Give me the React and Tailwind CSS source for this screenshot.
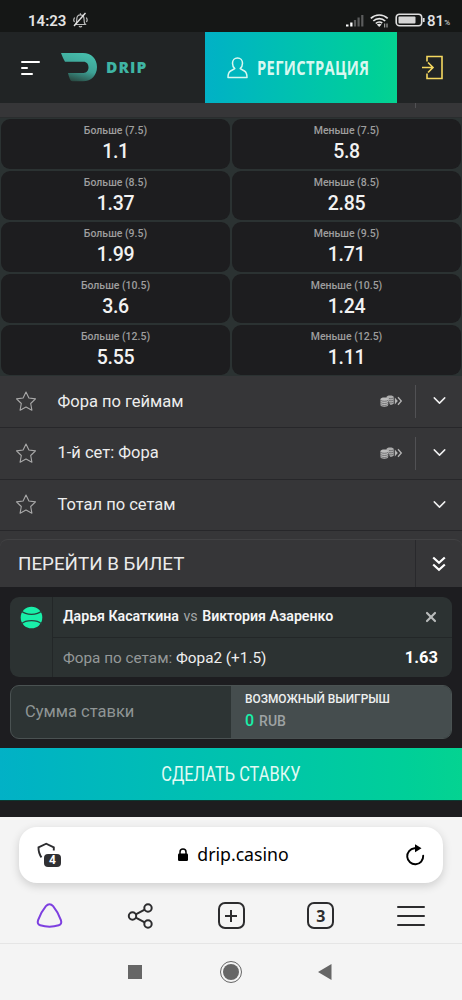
import { ChevronDown, X } from 'lucide-react'
import clsx from 'clsx'

const odds = [
  { line: '7.5', over: '1.1', under: '5.8' },
  { line: '8.5', over: '1.37', under: '2.85' },
  { line: '9.5', over: '1.99', under: '1.71' },
  { line: '10.5', over: '3.6', under: '1.24' },
  { line: '12.5', over: '5.55', under: '1.11' },
]

const markets = [
  { name: 'Фора по геймам', cashout: true },
  { name: '1-й сет: Фора', cashout: true },
  { name: 'Тотал по сетам', cashout: false },
]

function StatusBar() {
  return (
    <div className="flex h-8 items-center bg-[#151716] pt-2 pr-[12px] pl-7 text-[#e4e4e4]">
      <span className="mt-px w-[39px] text-[15px] leading-4 font-semibold whitespace-nowrap">14:23</span>
      <svg className="ml-[5px]" width="17" height="16" viewBox="0 0 17 16" fill="none" stroke="#bdbdbd" strokeWidth="1.2">
        <path d="M3.5 12.5h9.8c-1.2-1.2-1.3-2.5-1.3-5.5 0-2.6-1.5-4.2-3.6-4.2S4.8 4.4 4.8 7c0 3-.1 4.3-1.3 5.5zM7 14.2c.7.9 2.2.9 2.9 0M8.4 2.8V1.3M2.6 5.5C1.6 7 1.7 9 2.5 10M14.3 5.5c1 1.5.9 3.5.1 4.5" />
        <path d="M13.5 1 2 14" stroke="#e4e4e4" strokeWidth="1.4" />
      </svg>
      <svg className="ml-auto" width="18" height="13" viewBox="0 0 18 13">
        <path d="M0 12.5v-2h2.5v2zM4.2 12.5v-4h2.3v4z" fill="#fff" />
        <path d="M7.9 12.5V6h2.2v6.5zM11.500 12.5v-9h2.2v9zM15.2 12.5V1h2.2v11.5z" fill="#5b5c5c" />
      </svg>
      <svg className="ml-[6px]" width="19" height="15" viewBox="0 0 19 15" fill="none" stroke="#e4e4e4" strokeWidth="1.7">
        <path d="M.8 5.3c4.7-4.4 12.2-4.4 16.9 0M3.300 8c3.3-3.2 8.6-3.2 11.9 0M5.8 10.5c2-1.9 4.800-1.900 6.400-.3" />
        <path d="m6.8 11.500 2.400 2.600 2.400-2.600c-1.300-1.100-3.400-1.100-4.800 0z" fill="#e4e4e4" stroke="none" />
        <path d="M14.7 10.500v4M17 10.500v4" strokeWidth=".8" />
      </svg>
      <svg className="ml-[6px]" width="30" height="14" viewBox="0 0 30 14" fill="none">
        <rect x="1.2" y="1.2" width="25.5" height="11.5" rx="3.3" stroke="#dedede" strokeWidth="1.6" />
        <rect x="3.5" y="3.5" width="17" height="7" rx="1" fill="#d5d5d5" />
        <path d="M28.7 5v4" stroke="#dedede" strokeWidth="1.8" />
      </svg>
      <span className="mt-[2px] ml-[2px] text-[15px] leading-4 font-medium">81</span>
      <span className="mt-[5px] text-[8px] leading-3">%</span>
    </div>
  )
}

function Header() {
  return (
    <header className="flex h-[71px] bg-[#212425]">
      <div className="flex w-[205px] shrink-0 items-center pl-[21px]">
        <div className="flex w-5 flex-col gap-[4px]">
          <span className="h-[2px] w-[19px] rounded-full bg-white" />
          <span className="h-[2px] w-[7px] rounded-full bg-white" />
          <span className="h-[2px] w-[12px] rounded-full bg-white" />
        </div>
        <svg className="ml-5" width="37" height="29" viewBox="0 0 37 29">
          <defs>
            <linearGradient id="drip" x1=".65" y1="0" x2=".3" y2="1">
              <stop offset="0" stopColor="#46beac" />
              <stop offset=".55" stopColor="#3da195" />
              <stop offset="1" stopColor="#29463f" />
            </linearGradient>
          </defs>
          <path d="M0 0h22c8.5 0 14 6 14 14s-5.500 14.300-14 14.300H11.500C9 28.300 8.200 24.500 7 20h15.500c3.200 0 5-2.400 5-5.700s-1.800-5.600-5-5.600H4C2.300 6 1.200 3 0 0z" fill="url(#drip)" />
        </svg>
        <span className="ml-[8px] font-['Open_Sans'] text-[15.5px] font-extrabold tracking-[1.1px] text-[#3fb5a5]">DRIP</span>
      </div>
      <button className="flex w-[192px] shrink-0 items-center bg-linear-to-r from-[#02b1c6] to-[#04d391] pl-[22px] text-[#d8f8f0]">
        <svg className="shrink-0" width="21" height="22" viewBox="0 0 21 22" fill="none" stroke="currentColor" strokeWidth="1.5" strokeLinejoin="round">
          <path d="M10.5 1c-3 0-5 2.300-5 5.200 0 2.400 1 4.200 2.300 5.400L3.600 14C1.700 15.100 1 17 1 20.500h19c0-3.500-.7-5.400-2.600-6.500l-4.200-2.400c1.300-1.200 2.300-3 2.300-5.400 0-2.900-2-5.200-5-5.200z" />
        </svg>
        <span className="ml-[9px] w-[112px] origin-left scale-x-[0.735] font-['Open_Sans'] text-[20px] font-bold tracking-[.5px] whitespace-nowrap">РЕГИСТРАЦИЯ</span>
      </button>
      <div className="flex flex-1 items-center pl-[25px]">
        <svg width="22" height="25" viewBox="0 0 22 25" fill="none" stroke="#f5d860" strokeWidth="1.6">
          <path d="M5 6.500v-5h15v22H5v-5M0 12.500h11M6 7.500l5 5-5 5" />
        </svg>
      </div>
    </header>
  )
}

function OddsCell({ label, value }) {
  return (
    <div className="flex flex-col items-center rounded-[9px] bg-[#1d1d1f] pt-[5px]">
      <span className="text-[10.5px] leading-[14px] font-medium text-[#9e9e9e]">{label}</span>
      <span className="mt-[2px] text-[19.5px] leading-[23px] font-medium tracking-[-.3px] text-[#f2f2f2]">{value}</span>
    </div>
  )
}

function CashoutIcon() {
  return (
    <svg width="23" height="13" viewBox="0 0 23 13" fill="none">
      <path d="M6.500 2.200c0-1 1.500-1.700 3.600-1.700s3.700.7 3.700 1.700v6c0 .9-1.500 1.500-3.700 1.500z" fill="#adadad" />
      <path d="M.5 4.200C.5 3.200 2 2.500 4.300 2.500s3.900.7 3.900 1.700V10c0 1-1.600 1.700-3.900 1.700S.5 11 .5 10z" fill="#bcbcbc" />
      <path d="M.5 5.300c1.500 1.300 6.200 1.300 7.700 0M.5 7.500c1.500 1.300 6.200 1.300 7.700 0M.5 9.500c1.500 1.300 6.200 1.300 7.700 0M9 3.500c1.500.3 3.800.1 4.800-.7M9 5.600c1.500.3 3.800.1 4.800-.7M9 7.700c1.500.3 3.800.1 4.800-.7" stroke="#525254" strokeWidth=".7" />
      <path d="m14.800 2.500 3 3.500-3 3.500z" fill="#b5b5b5" />
      <path d="m18 2.300 3.300 3.700L18 9.700" stroke="#b5b5b5" strokeWidth="1.3" />
    </svg>
  )
}

function MarketRow({ name, cashout }) {
  return (
    <div className="flex h-[51.8px] items-center border-b border-[#27272a] bg-[#363638] pl-[15px]">
      <svg width="22" height="21" viewBox="0 0 22 21" fill="none" stroke="#a9a9a9" strokeWidth="1.1" strokeLinejoin="round">
        <path d="m11 1 2.900 6 6.600.9-4.800 4.600 1.200 6.700-5.900-3.200-5.900 3.200 1.200-6.700L1.500 7.900 8.100 7z" />
      </svg>
      <span className="mt-px ml-[20.5px] text-[16.5px] text-[#ededed]">{name}</span>
      <div className="ml-auto flex items-center">
        {cashout && <CashoutIcon />}
        <span className={clsx('ml-3 h-[33px] w-px', cashout && 'bg-[#515154]')} />
        <div className="-mt-px flex w-[46px] justify-center">
          <ChevronDown size={21} strokeWidth={1.7} className="text-[#f0f0f0]" />
        </div>
      </div>
    </div>
  )
}

function BetSlip() {
  return (
    <section className="h-[161px] bg-[#1d1d20] px-[10px] pt-[10px]">
      <div className="flex h-[80px] overflow-hidden rounded-[9px] bg-[#2c3232]">
        <div className="w-[43px] shrink-0 border-r border-[#232728] pt-[9px] pl-[10px]">
          <svg width="23" height="23" viewBox="0 0 23 23">
            <circle cx="11.5" cy="11.5" r="10.8" fill="#19efa9" />
            <path d="M1.300 5c4.700 4.400 15.700 4.400 20.400 0M1.300 18c4.700-4.400 15.700-4.400 20.400 0" fill="none" stroke="#26433d" strokeWidth="1.2" />
          </svg>
        </div>
        <div className="flex-1">
          <div className="flex h-[41px] items-center justify-between border-b border-[#232728] pr-[13px] pl-[10px]">
            <p className="text-[14.2px] whitespace-nowrap text-[#f5f5f5]">
              <span className="font-semibold">Дарья Касаткина</span>
              <span className="mx-[4.5px] text-[#a4a7a7]">vs</span>
              <span className="font-semibold">Виктория Азаренко</span>
            </p>
            <X size={16} strokeWidth={3.2} className="text-[#b9bbbb]" />
          </div>
          <div className="flex h-[39px] items-center justify-between pr-[14px] pl-[10px]">
            <p className="mt-px text-[15.3px] text-[#eeeeee]">
              <span className="text-[#959999]">Фора по сетам: </span>Фора2 (+1.5)
            </p>
            <span className="mt-px text-[16.5px] font-bold text-white">1.63</span>
          </div>
        </div>
      </div>
      <div className="mt-2 flex h-[54px] overflow-hidden rounded-[9px] border border-[#4a5252] bg-[#2d3434]">
        <div className="flex w-[220px] items-center pl-[14px] text-[16.5px] text-[#8f9595]">Сумма ставки</div>
        <div className="flex-1 bg-[#454d4e] pt-[6px] pl-[14px]">
          <div className="text-[11.9px] leading-[15px] font-medium text-[#eef0f0]">ВОЗМОЖНЫЙ ВЫИГРЫШ</div>
          <div className="mt-[5px] flex items-center gap-[5px] text-[14px] leading-[18px] font-medium text-[#9ea3a4]">
            <span className="text-[16px] text-[#19efa9]">0</span>RUB
          </div>
        </div>
      </div>
    </section>
  )
}

function BrowserBar() {
  return (
    <div className="h-[127px] border-b border-[#e5e5e5] bg-[#f4f4f4] px-[19px] pt-[10px]">
      <div className="flex h-[56px] items-center rounded-[18px] bg-white px-[17px] shadow-[0_3px_10px_rgba(0,0,0,0.16)]">
        <div className="relative h-7 w-[26px]">
          <svg className="absolute top-px left-0" width="20" height="18" viewBox="0 0 20 18" fill="none" stroke="#2c2c2f" strokeWidth="1.9">
            <path d="M17.800 8.500V5.300l-7.600-3.600-7.700 3.600c-.1 4 .9 7.300 3 10" />
          </svg>
          <span className="absolute top-[13px] left-[8px] flex h-[13px] w-[17px] items-center justify-center rounded-[4px] bg-[#303033] text-[12px] font-bold text-white">4</span>
        </div>
        <div className="flex flex-1 items-center justify-center">
          <svg width="12" height="14" viewBox="0 0 12 14">
            <path d="M3 6V4a3 3 0 0 1 6 0v2" fill="none" stroke="#000" strokeWidth="1.5" />
            <rect x="1" y="5.5" width="10" height="7.5" rx="1.2" />
          </svg>
          <span className="-mt-px ml-[8px] font-['Noto_Sans'] text-[17.7px] text-black">drip.casino</span>
        </div>
        <svg width="22" height="24" viewBox="0 0 22 24">
          <path d="M13.500 5.300H10.500a8 8 0 1 0 8.700 7.500" fill="none" stroke="#000" strokeWidth="1.9" strokeLinecap="round" />
          <path d="M11 1.200 17.500 5.300 11 9.300z" />
        </svg>
      </div>
      <div className="flex h-[61px] items-center justify-between pt-[5px] pr-[18px] pl-[16px] text-[#2c2c2e]">
        <svg width="29" height="28" viewBox="0 0 29 28" fill="none" stroke="#7d3fe0" strokeWidth="2">
          <path d="M14.500 2.300c1.500 0 2.600.8 3.600 1.900 3.300 4 6 8.700 7.800 13.900.9 2.800.2 4.500-2.100 5.200-5.600 1.700-13 1.700-18.600 0-2.300-.7-3-2.400-2.100-5.200 1.800-5.200 4.500-9.900 7.800-13.900 1-1.100 2.100-1.900 3.600-1.900z" />
        </svg>
        <svg width="28" height="28" viewBox="0 0 28 28" fill="none" stroke="currentColor" strokeWidth="2">
          <circle cx="5.5" cy="14" r="3.7" />
          <circle cx="21" cy="6" r="3.7" />
          <circle cx="21" cy="22" r="3.7" />
          <path d="m8.800 12.300 8.900-4.600M8.800 15.700l8.900 4.600" />
        </svg>
        <div className="flex size-[27px] items-center justify-center rounded-[7px] border-2 border-[#2c2c2e]">
          <svg width="14" height="14" viewBox="0 0 14 14" stroke="currentColor" strokeWidth="2">
            <path d="M7 1v12M1 7h12" />
          </svg>
        </div>
        <div className="flex size-[27px] items-center justify-center rounded-[7px] border-2 border-[#2c2c2e] font-['Noto_Sans'] text-[16px] font-bold">3</div>
        <div className="flex w-[28px] flex-col gap-[7px]">
          <span className="h-[2px] rounded-full bg-[#2c2c2e]" />
          <span className="h-[2px] rounded-full bg-[#2c2c2e]" />
          <span className="h-[2px] rounded-full bg-[#2c2c2e]" />
        </div>
      </div>
    </div>
  )
}

export default function App() {
  return (
    <div className="h-[1000px] w-[462px] overflow-hidden bg-[#f4f4f4] font-[Roboto,sans-serif]">
      <StatusBar />
      <Header />
      <div className="h-[15px] border-b border-[#2a2d2e] bg-[#363638]">
        <span className="ml-[415px] block h-[5px] w-px bg-[#515154]" />
      </div>
      <div className="grid h-[258px] grid-cols-2 grid-rows-5 gap-[2px] bg-[#2b3232] p-px">
        {odds.flatMap((o) => [
          <OddsCell key={'o' + o.line} label={`Больше (${o.line})`} value={o.over} />,
          <OddsCell key={'u' + o.line} label={`Меньше (${o.line})`} value={o.under} />,
        ])}
      </div>
      {markets.map((m) => (
        <MarketRow key={m.name} {...m} />
      ))}
      {/* Ticket toggle */}
      <div className="bg-[#363638] pt-[7.6px]">
        <div className="flex h-[48px] items-center rounded-t-[8px] border-t border-[#424244] pl-[18px]">
          <span className="mt-px text-[18.8px] text-[#ebebeb]">ПЕРЕЙТИ В БИЛЕТ</span>
          <div className="ml-auto flex h-full w-[47px] items-center justify-center border-l border-[#29292c] pt-px">
            <svg width="14" height="16" viewBox="0 0 14 16" fill="none" stroke="#fff" strokeWidth="2.2">
              <path d="m1.200 1.500 5.800 5.300 5.800-5.300M1.200 8.500 7 13.800l5.800-5.300" />
            </svg>
          </div>
        </div>
      </div>
      <BetSlip />
      <button className="flex h-[52px] w-full items-center justify-center bg-linear-to-r from-[#02b1c6] to-[#04d391] pt-px text-[19.5px] text-[#e2faf4]">
        <span className="scale-x-[0.84] whitespace-nowrap">СДЕЛАТЬ СТАВКУ</span>
      </button>
      <div className="h-[17px] border-t border-[#0a3830] bg-[#1d1d1f]" />
      <BrowserBar />
      {/* Android navigation */}
      <div className="flex h-[56px] items-center pl-[128px]">
        <span className="size-[14px] bg-[#666]" />
        <div className="ml-[78px] flex size-[22px] items-center justify-center rounded-full border-[1.5px] border-[#666]">
          <span className="size-[16px] rounded-full bg-[#666]" />
        </div>
        <svg className="ml-[76px]" width="14" height="16" viewBox="0 0 14 16" fill="#666">
          <path d="M13.500 0v16L0 8z" />
        </svg>
      </div>
    </div>
  )
}
